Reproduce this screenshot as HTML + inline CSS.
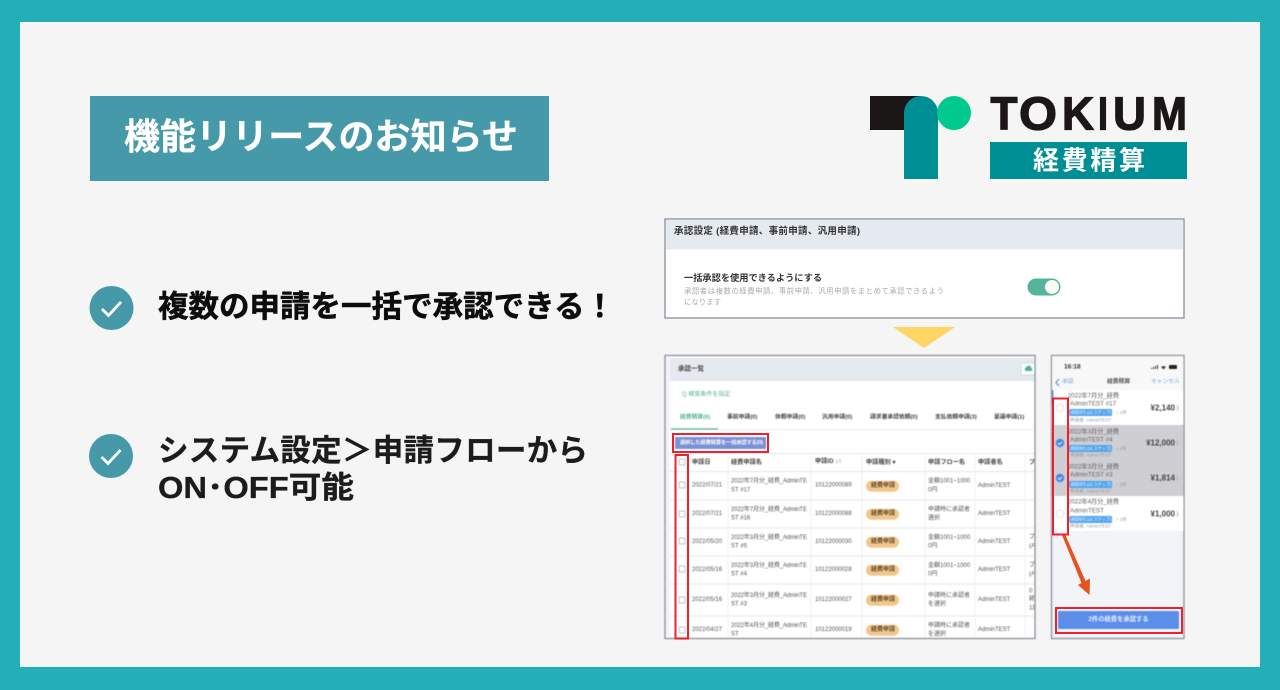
<!DOCTYPE html>
<html lang="ja"><head><meta charset="utf-8"><title>機能リリースのお知らせ</title>
<style>
html,body{margin:0;padding:0;width:1280px;height:690px;overflow:hidden;background:#23aeb8}
svg{display:block}
text{font-family:"Liberation Sans","Noto Sans CJK JP",sans-serif;dominant-baseline:central}
.b{font-weight:700}
.soft{filter:blur(.35px)}
.softer{filter:blur(.5px)}
.th{font-size:6.2px;font-weight:700;fill:#444}
.td{font-size:6px;fill:#555}
.bd{font-size:6px;font-weight:700;fill:#5c4a2c}
.tab{font-size:5.8px;font-weight:700;fill:#444}
.ph{font-size:6.300px;fill:#666}
.amt{font-size:8px;font-weight:700;fill:#444;text-anchor:end}
.chip{font-size:4.6px;fill:#e6f3ff}
.sm{font-size:4.6px;fill:#999}
.lg{font-size:46px;font-weight:700;fill:#1a1716;stroke:#1a1716;stroke-width:1.200px}
</style></head><body>
<svg width="1280" height="690" viewBox="0 0 1280 690" xmlns="http://www.w3.org/2000/svg">
<defs>
<clipPath id="tc"><rect x="666" y="356" width="368" height="281"/></clipPath>
</defs>
<rect width="1280" height="690" fill="#23aeb8"/>
<rect x="20" y="22" width="1240" height="645" fill="#f5f5f5"/>

<!-- title -->
<rect x="90" y="96" width="459" height="85" fill="#4599a9"/>
<text x="124" y="136.500" class="b" font-size="36" fill="#fff" textLength="394" stroke="#fff" stroke-width=".3">機能リリースのお知らせ</text>

<!-- logo -->
<rect x="870" y="96" width="50" height="34" fill="#1a1716"/>
<path d="M904 179V113a17 17 0 0 1 34 0V179Z" fill="#008e95"/>
<circle cx="954" cy="113" r="17" fill="#00c98f"/>
<text x="990.500" y="113.500" class="lg" textLength="27" lengthAdjust="spacingAndGlyphs">T</text>
<text x="1019" y="113.500" class="lg" textLength="38" lengthAdjust="spacingAndGlyphs">O</text>
<text x="1062" y="113.500" class="lg" textLength="32" lengthAdjust="spacingAndGlyphs">K</text>
<text x="1098" y="113.500" class="lg" textLength="10" lengthAdjust="spacingAndGlyphs">I</text>
<text x="1113" y="113.500" class="lg" textLength="33" lengthAdjust="spacingAndGlyphs">U</text>
<text x="1152" y="113.500" class="lg" textLength="35" lengthAdjust="spacingAndGlyphs">M</text>
<rect x="990" y="142" width="197" height="37" fill="#008e95"/>
<text x="1033" y="160.500" class="b" font-size="26" fill="#fff" textLength="112">経費精算</text>

<!-- bullets -->
<circle cx="111.500" cy="308" r="22" fill="#4599a9"/>
<path d="M102 309l6.500 6.500L121 302" fill="none" stroke="#fff" stroke-width="2.800"/>
<text x="158" y="307" class="b" font-size="30.500" fill="#0c0c0c" stroke="#0c0c0c" stroke-width=".5" textLength="457">複数の申請を一括で承認できる！</text>
<circle cx="111" cy="456" r="22" fill="#4599a9"/>
<path d="M101.500 457l6.500 6.500L120.500 450" fill="none" stroke="#fff" stroke-width="2.800"/>
<text x="158" y="451" class="b" font-size="30.500" fill="#1c1c1c" stroke="#1c1c1c" stroke-width=".3" textLength="430">システム設定＞申請フローから</text>
<text x="158" y="488" class="b" font-size="30.500" fill="#1c1c1c" stroke="#1c1c1c" stroke-width=".3" textLength="196" lengthAdjust="spacingAndGlyphs">ON･OFF可能</text>

<!-- settings panel -->
<g class="soft">
<rect x="665" y="219" width="519" height="99" fill="#fff" stroke="#8a8c9a" stroke-width="1.300"/>
<rect x="665.700" y="219.700" width="517.600" height="29.800" fill="#e5eaf0"/>
<text x="674" y="231.500" class="b" font-size="9.500" fill="#333" textLength="186">承認設定 (経費申請、事前申請、汎用申請)</text>
<text x="684" y="278" class="b" font-size="9.200" fill="#333" textLength="138">一括承認を使用できるようにする</text>
<text x="684" y="291" font-size="7.400" fill="#aaa" textLength="260">承認者は複数の経費申請、事前申請、汎用申請をまとめて承認できるよう</text>
<text x="684" y="302" font-size="7.400" fill="#aaa">になります</text>
<rect x="1027.500" y="278.500" width="33" height="17" rx="8.500" fill="#55b59b"/>
<circle cx="1052" cy="287" r="7" fill="#fdfdf5"/>
</g>
<path d="M893 327H955L924 348Z" fill="#ffd563"/>

<!-- table panel -->
<g class="softer">
<rect x="665" y="355.500" width="370" height="283" fill="#fff" stroke="#8a8c9a" stroke-width="1.300"/>
<g clip-path="url(#tc)">
<rect x="666" y="356" width="4" height="282" fill="#f4f4f6"/>
<rect x="670" y="358" width="365" height="23" fill="#e5eaf0"/>
<text x="678" y="369" class="b" font-size="6.500" fill="#444">承認一覧</text>
<rect x="1021" y="363" width="15" height="12" fill="#fff" stroke="#bfe5da"/>
<path d="M1026 371a2 2 0 0 1 .3-3.800 2.600 2.600 0 0 1 5 .8 1.600 1.600 0 0 1 0 3Z" fill="#4fb296"/>
<text x="682" y="395" font-size="6" fill="#55b59b">Q 検索条件を指定</text>
<g class="tab">
<text x="680" y="417.500" style="fill:#55b59b">経費精算(6)</text>
<text x="727" y="417.500">事前申請(0)</text>
<text x="775" y="417.500">休暇申請(0)</text>
<text x="822" y="417.500">汎用申請(0)</text>
<text x="870" y="417.500">請求書承認依頼(0)</text>
<text x="935" y="417.500">支払依頼申請(3)</text>
<text x="994" y="417.500">稟議申請(1)</text>
</g>
<path d="M670 429.500H1035" stroke="#eee"/>
<path d="M671 429H718" stroke="#55b59b" stroke-width="1.200"/>
<rect x="675" y="437" width="91" height="12" fill="#7b91d6"/>
<text x="680" y="443" font-size="5.200" class="b" fill="#fff" textLength="83">選択した経費精算を一括承認する(0)</text>
<path d="M670 453.500H1035M670 471.500H1035M670 500H1035M670 528H1035M670 556H1035M670 584H1035M670 616H1035" stroke="#e6e6e6"/>
<path d="M689 453V638M728 453V638M811 453V638M862 453V638M925 453V638M975 453V638M1025 453V638" stroke="#efefef"/>
<g fill="#fff" stroke="#aaa" stroke-width=".7">
<rect x="679" y="459" width="6" height="6" rx="1"/>
<rect x="679" y="482" width="6" height="6" rx="1"/>
<rect x="679" y="511" width="6" height="6" rx="1"/>
<rect x="679" y="538" width="6" height="6" rx="1"/>
<rect x="679" y="566" width="6" height="6" rx="1"/>
<rect x="679" y="597" width="6" height="6" rx="1"/>
<rect x="679" y="627" width="6" height="6" rx="1"/>
</g>
<g transform="translate(0,.7)">
<text x="692" y="462" class="th">申請日</text>
<text x="731" y="462" class="th">経費申請名</text>
<text x="815" y="461" class="th">申請ID ↓↑</text>
<text x="866" y="462" class="th">申請種別 ▾</text>
<text x="928" y="462" class="th">申請フロー名</text>
<text x="978" y="462" class="th">申請者名</text>
<text x="1029" y="462" class="th">プ</text>

<text x="692" y="485" class="td">2022/07/21</text>
<text x="731" y="481" class="td" textLength="76">2022年7月分_経費_AdminTE</text><text x="731" y="490" class="td">ST #17</text>
<text x="815" y="485" class="td">10122000089</text>
<rect x="866" y="480" width="33" height="11" rx="5.500" fill="#f3c68b"/><text x="871" y="485.500" class="bd">経費申請</text>
<text x="928" y="481" class="td">金額1001~1000</text><text x="928" y="490" class="td">0円</text>
<text x="978" y="485.500" class="td">AdminTEST</text>

<text x="692" y="513.500" class="td">2022/07/21</text>
<text x="731" y="509.500" class="td" textLength="76">2022年7月分_経費_AdminTE</text><text x="731" y="518" class="td">ST #16</text>
<text x="815" y="513.500" class="td">10122000088</text>
<rect x="866" y="508" width="33" height="11" rx="5.500" fill="#f3c68b"/><text x="871" y="513.500" class="bd">経費申請</text>
<text x="928" y="509.500" class="td">申請時に承認者</text><text x="928" y="518" class="td">選択</text>
<text x="978" y="513.500" class="td">AdminTEST</text>

<text x="692" y="541.500" class="td">2022/05/20</text>
<text x="731" y="537.500" class="td" textLength="76">2022年3月分_経費_AdminTE</text><text x="731" y="546" class="td">ST #5</text>
<text x="815" y="541.500" class="td">10122000030</text>
<rect x="866" y="536" width="33" height="11" rx="5.500" fill="#f3c68b"/><text x="871" y="541.500" class="bd">経費申請</text>
<text x="928" y="537.500" class="td">金額1001~1000</text><text x="928" y="546" class="td">0円</text>
<text x="978" y="541.500" class="td">AdminTEST</text>
<text x="1029" y="537" class="td">プ</text><text x="1029" y="546" class="td">(A)</text>

<text x="692" y="569.500" class="td">2022/05/16</text>
<text x="731" y="565.500" class="td" textLength="76">2022年3月分_経費_AdminTE</text><text x="731" y="574" class="td">ST #4</text>
<text x="815" y="569.500" class="td">10122000028</text>
<rect x="866" y="564" width="33" height="11" rx="5.500" fill="#f3c68b"/><text x="871" y="569.500" class="bd">経費申請</text>
<text x="928" y="565.500" class="td">金額1001~1000</text><text x="928" y="574" class="td">0円</text>
<text x="978" y="569.500" class="td">AdminTEST</text>
<text x="1029" y="565" class="td">プ</text><text x="1029" y="574" class="td">(A)</text>

<text x="692" y="599.500" class="td">2022/05/16</text>
<text x="731" y="595.500" class="td" textLength="76">2022年3月分_経費_AdminTE</text><text x="731" y="604" class="td">ST #3</text>
<text x="815" y="599.500" class="td">10122000027</text>
<rect x="866" y="594" width="33" height="11" rx="5.500" fill="#f3c68b"/><text x="871" y="599.500" class="bd">経費申請</text>
<text x="928" y="595.500" class="td">申請時に承認者</text><text x="928" y="604" class="td">を選択</text>
<text x="978" y="599.500" class="td">AdminTEST</text>
<text x="1029" y="591" class="td">0</text><text x="1029" y="599" class="td">締</text><text x="1029" y="608" class="td">11</text>

<text x="692" y="629.500" class="td">2022/04/27</text>
<text x="731" y="625.500" class="td" textLength="76">2022年4月分_経費_AdminTE</text><text x="731" y="634" class="td">ST</text>
<text x="815" y="629.500" class="td">10122000019</text>
<rect x="866" y="624" width="33" height="11" rx="5.500" fill="#f3c68b"/><text x="871" y="629.500" class="bd">経費申請</text>
<text x="928" y="625.500" class="td">申請時に承認者</text><text x="928" y="634" class="td">を選択</text>
<text x="978" y="629.500" class="td">AdminTEST</text>
</g>
</g>
</g>
<g fill="none" stroke="#f0202a" stroke-width="2" class="soft">
<rect x="673" y="434" width="95" height="18"/>
<rect x="675.500" y="455" width="12.500" height="183.500"/>
</g>

<!-- phone panel -->
<g class="softer">
<rect x="1051.500" y="355.500" width="132.500" height="283" fill="#f2f4f7" stroke="#8a8c9a" stroke-width="1.300"/>
<rect x="1052" y="356" width="131.500" height="34" fill="#f8f8f8"/>
<text x="1064" y="367" class="b" font-size="6.500" fill="#333">16:18</text>
<path d="M1151 369h1v-1h-1zM1153 369h1v-2h-1zM1155 369h1v-3h-1zM1157 369h1v-4h-1z" fill="#333"/>
<path d="M1161 367a4 4 0 0 1 5 0l-2.500 2.500Z" fill="#444"/>
<rect x="1169" y="365" width="8" height="4" rx="1" fill="#222"/>
<path d="M1059 379l-3 3.500 3 3.500" fill="none" stroke="#5a96e8" stroke-width="1.200"/>
<text x="1062" y="382" font-size="5.800" fill="#7aa8ea">承認</text>
<text x="1107" y="382" font-size="5.800" class="b" fill="#555">経費精算</text>
<text x="1151" y="382" font-size="5.800" fill="#7aa8ea">キャンセル</text>

<rect x="1052" y="390" width="131.500" height="35" fill="#fff"/>
<rect x="1052" y="425" width="131.500" height="71" fill="#cfcfd3"/>
<rect x="1052" y="496" width="131.500" height="35" fill="#fff"/>
<rect x="1052" y="390" width="1.500" height="14" fill="#5a96e8"/>

<circle cx="1060" cy="408" r="3.800" fill="#fff" stroke="#ccc" stroke-width=".6"/>
<circle cx="1060" cy="443" r="4.200" fill="#4a86e8"/><path d="M1058 443l1.500 1.500 2.500-2.500" fill="none" stroke="#fff" stroke-width=".9"/>
<circle cx="1060" cy="478" r="4.200" fill="#4a86e8"/><path d="M1058 478l1.500 1.500 2.500-2.500" fill="none" stroke="#fff" stroke-width=".9"/>
<circle cx="1060" cy="514" r="3.800" fill="#fff" stroke="#ccc" stroke-width=".6"/>

<text x="1068" y="396" class="ph" textLength="51">2022年7月分_経費</text>
<text x="1070" y="404" class="ph">AdminTEST #17</text>
<rect x="1069" y="409" width="43" height="7" rx="1" fill="#4da3ee"/><text x="1070" y="412.500" class="chip" textLength="41">承認待ち (1/1 ステップ)</text>
<text x="1115" y="412.500" class="sm">・1件</text>
<text x="1070" y="420" class="sm">申請者: AdminTEST</text>
<text x="1175" y="408" class="amt">¥2,140</text>

<text x="1068" y="432" class="ph" textLength="51">2022年3月分_経費</text>
<text x="1070" y="440" class="ph">AdminTEST #4</text>
<rect x="1069" y="445" width="43" height="7" rx="1" fill="#4da3ee"/><text x="1070" y="448.500" class="chip" textLength="41">承認待ち (1/1 ステップ)</text>
<text x="1115" y="448.500" class="sm">・2件</text>
<text x="1070" y="455" class="sm">申請者: AdminTEST</text>
<text x="1175" y="443" class="amt">¥12,000</text>

<text x="1068" y="467" class="ph" textLength="51">2022年3月分_経費</text>
<text x="1070" y="475" class="ph">AdminTEST #3</text>
<rect x="1069" y="481" width="43" height="7" rx="1" fill="#4da3ee"/><text x="1070" y="484.500" class="chip" textLength="41">承認待ち (1/1 ステップ)</text>
<text x="1115" y="484.500" class="sm">・2件</text>
<text x="1070" y="491" class="sm">申請者: AdminTEST</text>
<text x="1175" y="478" class="amt">¥1,814</text>

<text x="1068" y="502" class="ph" textLength="51">2022年4月分_経費</text>
<text x="1070" y="511" class="ph">AdminTEST</text>
<rect x="1069" y="516" width="43" height="7" rx="1" fill="#4da3ee"/><text x="1070" y="519.500" class="chip" textLength="41">承認待ち (1/1 ステップ)</text>
<text x="1115" y="519.500" class="sm">・1件</text>
<text x="1070" y="526" class="sm">申請者: AdminTEST</text>
<text x="1175" y="514" class="amt">¥1,000</text>

<path d="M1176.500 405.500l2 2.500-2 2.500M1176.500 440.500l2 2.500-2 2.500M1176.500 475.500l2 2.500-2 2.500M1176.500 511.500l2 2.500-2 2.500" fill="none" stroke="#aaa" stroke-width=".7"/>

<rect x="1058" y="611" width="121" height="18" rx="1" fill="#5a8ee8"/>
<text x="1118.500" y="619.500" class="b" font-size="6.300" fill="#e8f0ff" text-anchor="middle">2件の経費を承認する</text>
</g>
<path d="M1062 535L1065 534L1085.500 581L1090 578.500L1089.500 595L1078 585L1081.500 583Z" fill="#e8501f" class="soft"/>
<g fill="none" stroke="#f0202a" stroke-width="2" class="soft">
<rect x="1053" y="398.500" width="15" height="136"/>
<rect x="1056" y="608" width="126" height="25"/>
</g>
</svg>
</body></html>
